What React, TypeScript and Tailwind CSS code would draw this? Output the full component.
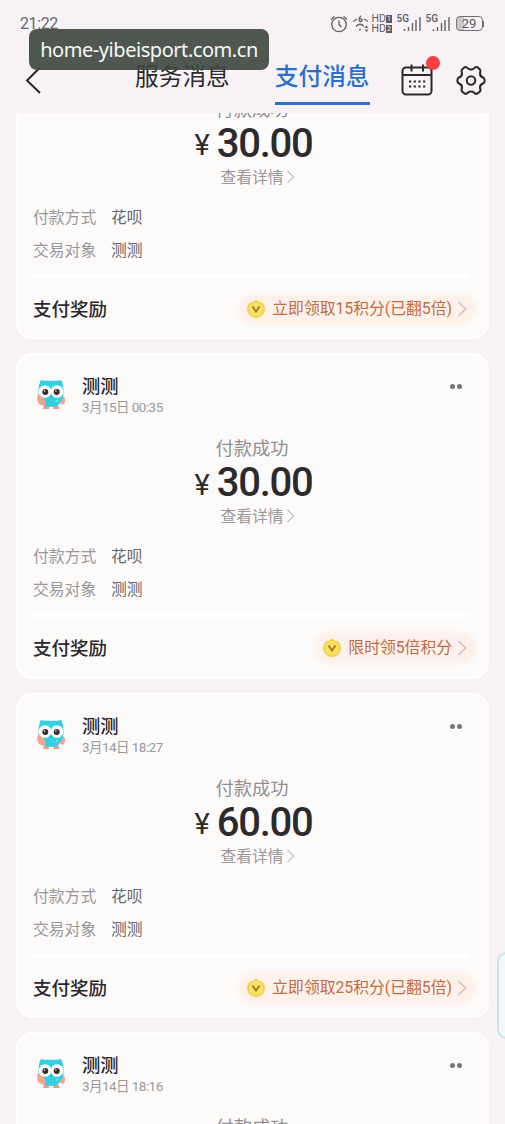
type Message = {
  id: number;
  date: string;
  amount: string;
  reward: string;
};

const messages: Message[] = [
  { id: 1, date: '3月15日 00:52', amount: '30.00', reward: '立即领取15积分(已翻5倍)' },
  { id: 2, date: '3月15日 00:35', amount: '30.00', reward: '限时领5倍积分' },
  { id: 3, date: '3月14日 18:27', amount: '60.00', reward: '立即领取25积分(已翻5倍)' },
  { id: 4, date: '3月14日 18:16', amount: '30.00', reward: '限时领5倍积分' },
];

function Owl() {
  return (
    <svg width="32" height="34" viewBox="0 0 32 34" className="shrink-0">
      <path d="M27 17c4 3 4 7 1 10l-4-2z" fill="#f3a58c" />
      <path d="M9 27h5v4H8zM19 27h4l1.500 4H18z" fill="#ee9a85" />
      <path d="M5.500 2.500c2-.5 3 .3 5 .3h11c2 0 3-.8 5-.3 1 3 2 6 2 9.500 0 6-.5 9-3.500 13-2 3-5 4-9 4s-7-1-9-4c-3-4-3.500-7-3.500-13 0-3.500 1-6.500 2-9.500z" fill="#35cfe2" />
      <path d="M3.500 16c4 1 6 5 7 9 0 3-3 3-5.500 1.500-3-2-4-6.500-1.500-10.500z" fill="#f3a58c" />
      <circle cx="10" cy="13.500" r="6.300" fill="#fff" />
      <circle cx="22" cy="13.500" r="6.300" fill="#fff" />
      <circle cx="10.300" cy="14" r="3" fill="#38292e" />
      <circle cx="21.700" cy="14" r="3" fill="#38292e" />
      <circle cx="9.500" cy="13" r="0.8" fill="#fff" />
      <circle cx="20.900" cy="13" r="0.8" fill="#fff" />
      <path d="M14.500 18h3L16 20.500z" fill="#2ab4cc" />
      <path d="M21 23.500l2-1.500" stroke="#8ce6ee" strokeWidth="1.500" />
    </svg>
  );
}

function Coin() {
  return (
    <svg width="20" height="20" viewBox="0 0 20 20" className="shrink-0">
      <path d="M10 .5l3 2 4 1.500 1.500 3.500.7 3.500-2 4.500-3.200 2.500L10 19.500 6 18l-3.200-2.500-2-4.500.7-3.500L3 4l4-1.500z" fill="#f2d451" />
      <circle cx="10" cy="10" r="7" fill="#f9e067" />
      <path d="M6.500 7.500L10 12.500l3.500-5" fill="none" stroke="#a97f26" strokeWidth="2" />
    </svg>
  );
}

function Signal() {
  return (
    <div className="relative h-5 w-[25px]">
      <span className="absolute -top-px left-0 font-['Roboto'] text-[10px] leading-3 font-medium text-[#5d595d]">5G</span>
      <svg width="25" height="20" viewBox="0 0 25 20">
        <path d="M7.500 17v-2M11.500 17v-4M15.500 17V9M19 17V6M23 17V3" stroke="#656165" strokeWidth="1.400" />
      </svg>
    </div>
  );
}

function StatusBar() {
  return (
    <div className="flex h-[46px] items-center pt-px pr-[21px] pl-[20px]">
      <span className="font-['Roboto'] text-[16px] leading-5 tracking-[-0.4px] text-[#6b676b]">21:22</span>
      <div className="ml-auto flex items-center">
        <svg width="18" height="18" viewBox="0 0 18 18" fill="none" stroke="#605c60" strokeWidth="1.300">
          <circle cx="9" cy="9.500" r="7.200" />
          <path d="M9 5.500v4l2.500 2.500M1 4.500L4.500 1.500M17 4.500l-3.500-3" />
        </svg>
        <svg width="18" height="18" viewBox="0 0 18 18" className="ml-[4px]" fill="none" stroke="#656165" strokeWidth="1.300">
          <path d="M1 6.500l4-2.500M12 4l4 2.500M4 11.500c2.500-3 5.500-3 8 0" />
          <path d="M9 .8C6.800 3 6.300 6.500 8.700 6.500c2.200 0 2-3.200-1-2.500" />
          <circle cx="8" cy="14.500" r="1" fill="#656165" stroke="none" />
          <path d="M12.500 13l2-2.500 2 2.500zM12.500 14.500l2 2.500 2-2.500z" fill="#656165" stroke="none" />
        </svg>
        <div className="ml-[2px] w-[21px] font-['Roboto'] text-[10.500px] leading-[10px] text-[#5d595d]">
          <div className="flex items-center">HD<span className="h-2 bg-[#5d595d] px-px text-[7px] leading-2 text-white">1</span></div>
          <div className="flex items-center">HD<span className="h-2 bg-[#5d595d] px-px text-[7px] leading-2 text-white">2</span></div>
        </div>
        <div className="ml-[4px]"><Signal /></div>
        <div className="ml-[4px]"><Signal /></div>
        <div className="ml-[5px] flex h-[15px] w-[27px] items-center justify-center rounded-[4px] border-[1.5px] border-[#716d71] bg-linear-to-r from-[#c9c5c9] from-28% to-transparent to-28% font-['Roboto'] text-[13px] leading-none text-[#5d595d]">
          29
        </div>
        <div className="h-[6px] w-[1.5px] bg-[#716d71]" />
      </div>
    </div>
  );
}

function TopNav() {
  return (
    <div className="flex h-[67px] items-start">
      <svg width="20" height="30" viewBox="0 0 20 30" className="mt-[19px] ml-[24px]">
        <path d="M16 2.500L3 15.500l13 12.500" fill="none" stroke="#29262a" strokeWidth="2" />
      </svg>
      <div className="ml-[91px] pt-[13px] text-[23.700px] leading-8 text-[#2d2a2d]">服务消息</div>
      <div className="ml-[45px] h-[59px] border-b-[3px] border-[#2b73d2] pt-[13px] text-[23.700px] leading-8 font-medium text-[#2b6fce]">
        支付消息
      </div>
      <div className="relative mt-[18px] ml-[31px]">
        <svg width="32" height="33" viewBox="0 0 32 33" fill="none" stroke="#2b292b" strokeWidth="2">
          <rect x="1.500" y="3.500" width="29" height="27" rx="3.500" />
          <path d="M1.500 11h29M10.500 .5v7M22 .5v7" />
          <path d="M8 17.500h17M8 22.500h17" strokeDasharray="2.200 2.500" />
        </svg>
        <span className="absolute -top-[8px] left-[25px] h-[14px] w-[14px] rounded-full bg-[#f63f41]" />
      </div>
      <svg width="30" height="31" viewBox="0 0 30 31" className="mt-[19px] ml-[23px]" fill="none" stroke="#2b292b" strokeWidth="2.100" strokeLinejoin="round">
        <path d="M8.500 2.200Q10.500 1.400 12 3.500Q15 5.500 18 3.500Q19.500 1.400 21.500 2.200L24 4.500Q25 6 24 8.500Q24 11.500 27 12.500Q28.700 13.500 28.700 15.500Q28.700 17.500 27 18.500Q24 19.500 24 22.500Q25 25 24 26.500L21.500 28.500Q19.500 29.500 18 27.500Q15 25.500 12 27.500Q10.500 29.500 8.500 28.500L6 26.500Q5 25 6 22.500Q6 19.500 3 18.500Q1.300 17.500 1.300 15.500Q1.300 13.500 3 12.500Q6 11.500 6 8.500Q5 6 6 4.500z" />
        <circle cx="15" cy="15.500" r="4.200" />
      </svg>
    </div>
  );
}

function Row({ label, value }: { label: string; value: string }) {
  return (
    <div className="flex h-[33px] items-center text-[15.800px] leading-[33px]">
      <span className="w-[78px] text-[#99979a]">{label}</span>
      <span className="text-[#68666a]">{value}</span>
    </div>
  );
}

function MessageCard({ date, amount, reward }: Message) {
  return (
    <div className="h-[325.500px] shrink-0 rounded-[16px] border-2 border-[#fffefe] bg-[#fcfbfa] pt-[18px] pr-[12px] pl-[15px]">
      <div className="flex h-[44px]">
        <div className="mt-[5px] ml-[2px]"><Owl /></div>
        <div className="ml-[15px]">
          <div className="text-[18.300px] leading-6 font-medium text-[#252325]">测测</div>
          <div className="font-['Roboto','Noto_Sans_CJK_SC',sans-serif] text-[13.500px] leading-5 tracking-[-0.55px] text-[#9a989b]">{date}</div>
        </div>
        <div className="mt-[11px] mr-[13px] ml-auto flex gap-[2px]">
          <span className="h-[5px] w-[5px] rounded-full bg-[#77747a]" />
          <span className="h-[5px] w-[5px] rounded-full bg-[#77747a]" />
        </div>
      </div>

      <div className="mt-4 mr-[4px] text-center text-[18.300px] leading-7 text-[#918f92]">付款成功</div>
      <div className="flex h-[44px] items-center justify-center font-['Roboto'] text-[#2c2a2d]">
        <span className="mt-[4px] mr-[7px] ml-[-1px] text-[29px] leading-none">¥</span>
        <span className="text-[40px] leading-[44px] font-medium tracking-[-1.3px]">{amount}</span>
      </div>
      <div className="flex h-[22px] items-center justify-center pl-[8px] text-[15.800px] text-[#9a989b]">
        查看详情
        <svg width="10" height="16" viewBox="0 0 10 16" className="ml-[2px]">
          <path d="M1.500 2l6 6-6 6" fill="none" stroke="#c6c3c6" strokeWidth="1.300" />
        </svg>
      </div>

      <div className="mt-[12px]">
        <Row label="付款方式" value="花呗" />
        <Row label="交易对象" value="测测" />
      </div>
      <div className="mt-[8px] mr-[6px] h-[5px] bg-white" />

      <div className="mt-[12px] flex h-[36px] items-center">
        <span className="text-[18.500px] font-medium text-[#2a282b]">支付奖励</span>
        <div className="ml-auto flex h-[28px] items-center rounded-full bg-[#fdf1eb] pr-[7px] pl-[6px] shadow-[0_0_5px_2px_#fdf1eb]">
          <Coin />
          <span className="ml-[6px] font-['Roboto','Noto_Sans_CJK_SC',sans-serif] text-[15.800px] text-[#c26b45]">{reward}</span>
          <svg width="11" height="18" viewBox="0 0 11 18" className="ml-[5px]">
            <path d="M1.500 2l7 7-7 7" fill="none" stroke="#d8c3b9" strokeWidth="1.700" />
          </svg>
        </div>
      </div>
    </div>
  );
}

export default function App() {
  return (
    <div className="relative flex h-[1124px] w-[505px] flex-col overflow-hidden bg-[#f8f2f7] font-['Noto_Sans_CJK_SC',sans-serif]">
      <StatusBar />
      <TopNav />
      <div className="mx-[16px] min-h-0 flex-1 overflow-hidden">
        <div className="-mt-[99.500px] flex flex-col gap-[14px]">
          {messages.map((m) => (
            <MessageCard key={m.id} {...m} />
          ))}
        </div>
      </div>

      <div className="absolute top-[952px] left-[497px] h-[87px] w-[30px] rounded-[10px] border-2 border-[#c9e9e2] bg-[#f2fafc]" />
      <div className="absolute top-[29px] left-[29px] flex h-[41px] w-[240px] items-center justify-center rounded-[8px] bg-[#3b473d]/90 font-['Noto_Sans'] text-[20px] tracking-[-0.45px] text-[#f7f8f7]">
        home-yibeisport.com.cn
      </div>
    </div>
  );
}
